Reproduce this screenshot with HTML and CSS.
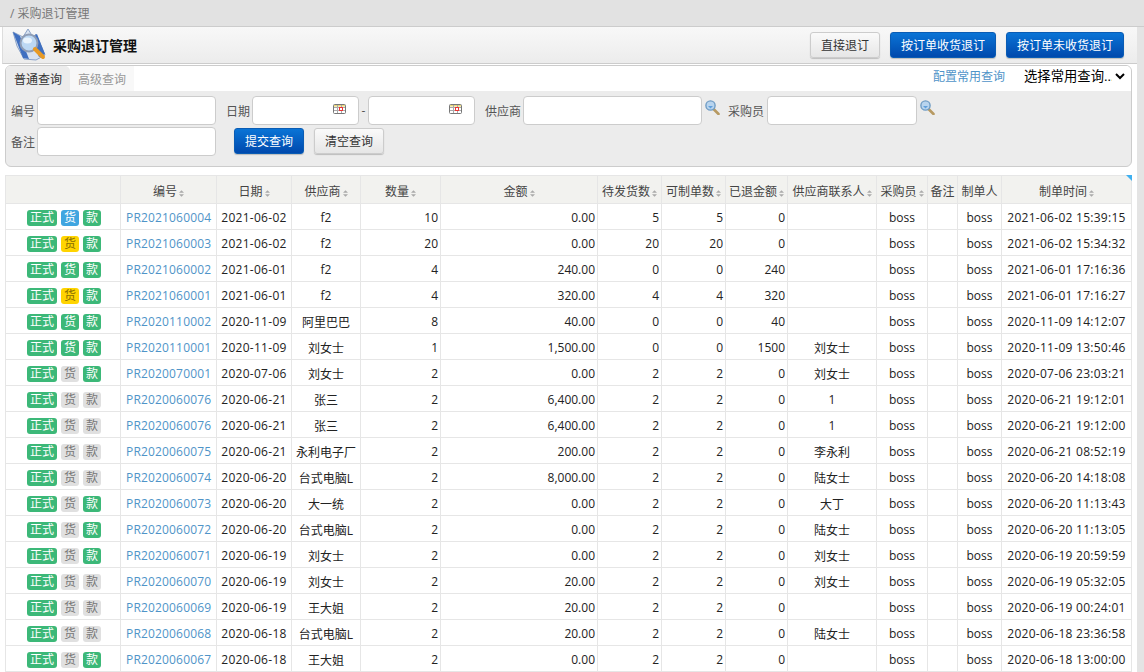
FILE: index.html
```html
<!DOCTYPE html>
<html lang="zh-CN">
<head>
    <meta charset="UTF-8">
    <title>采购退订管理</title>
    <link rel="stylesheet" href="styles.css">
</head>
<body>
    <svg class="svg-defs" width="0" height="0">
        <symbol id="ico-sort" viewBox="0 0 7 9">
            <path d="M3.5 0 L7 3.6 H0 Z M0 5.4 H7 L3.5 9 Z" fill="#aaa"/>
        </symbol>
        <symbol id="ico-cal" viewBox="0 0 13 10">
            <rect x="0.5" y="0.5" width="12" height="9" rx="1" fill="#fff" stroke="#777"/>
            <rect x="1" y="1" width="11" height="1.5" fill="#e8d878"/>
            <path d="M4.5 1V9M8.5 1V9M1 3.5H12M1 6.5H12" stroke="#aaa" stroke-width="1"/>
            <rect x="6.5" y="3.5" width="3" height="3" fill="#fff" stroke="#e33"/>
        </symbol>
        <symbol id="ico-find" viewBox="0 0 15 15">
            <path d="M8.5 9 L13.5 14" stroke="#b79a62" stroke-width="2.6" stroke-linecap="round"/>
            <circle cx="5.5" cy="5.5" r="4.6" fill="#b8d4ee" stroke="#6f9cc4" stroke-width="1.4"/>
            <path d="M3 6 L5.5 8.5 L8 6 Z" fill="#5f9fdc"/>
        </symbol>
    </svg>

    <div class="crumbs">/ 采购退订管理</div>

    <div class="page">
        <div class="main">
            <div class="title-bar">
                <svg class="logo" width="34" height="34" viewBox="0 0 34 34">
                    <path d="M1 4 L11 9 L16 1 L21 9 L24 6 L33 27 L24 32 L12 31 L5 18 Z" fill="#d8e2f0" stroke="#8ba3c8"/>
                    <path d="M1 4 L8 8 L17 31 L11 30 Z" fill="#3f6fc0"/>
                    <path d="M25 6 L33 26 L27 29 L20 10 Z" fill="#3f6fc0"/>
                    <circle cx="17" cy="15" r="8.5" fill="#bcd8f4" stroke="#8f9db5" stroke-width="2"/>
                    <ellipse cx="15.5" cy="12.5" rx="4.5" ry="3" fill="#eaf4fd"/>
                    <path d="M23 21 L31 29" stroke="#e89a24" stroke-width="4" stroke-linecap="round"/>
                </svg>
                <h1>采购退订管理</h1>
                <div class="title-actions">
                    <button class="btn">直接退订</button>
                    <button class="btn btn-primary">按订单收货退订</button>
                    <button class="btn btn-primary">按订单未收货退订</button>
                </div>
            </div>

            <div class="query-panel">
                <div class="query-tabs">
                    <span class="tab tab-active">普通查询</span>
                    <span class="tab">高级查询</span>
                    <div class="query-saved">
                        <a class="link" href="#">配置常用查询</a>
                        <select class="saved-select">
                            <option>选择常用查询...</option>
                        </select>
                    </div>
                </div>
                <div class="query-form">
                    <div class="form-row">
                        <label class="lbl">编号</label>
                        <input class="field field-code" type="text">
                        <label class="lbl lbl-date">日期</label>
                        <span class="date-field"><input class="field field-date" type="text"><svg class="cal"><use href="#ico-cal"/></svg></span>
                        <span class="dash">-</span>
                        <span class="date-field"><input class="field field-date" type="text"><svg class="cal"><use href="#ico-cal"/></svg></span>
                        <label class="lbl lbl-supplier">供应商</label>
                        <input class="field field-code" type="text">
                        <svg class="find"><use href="#ico-find"/></svg>
                        <label class="lbl lbl-buyer">采购员</label>
                        <input class="field field-buyer" type="text">
                        <svg class="find"><use href="#ico-find"/></svg>
                    </div>
                    <div class="form-row">
                        <label class="lbl">备注</label>
                        <input class="field field-code" type="text">
                        <button class="btn btn-primary btn-submit">提交查询</button>
                        <button class="btn btn-clear">清空查询</button>
                    </div>
                </div>
            </div>

            <div class="grid-wrap">
                <span class="grid-corner"></span>
                <table class="grid">
                    <colgroup>
                        <col class="c-status"><col class="c-code"><col class="c-date"><col class="c-supplier"><col class="c-qty"><col class="c-amount">
                        <col class="c-num"><col class="c-num"><col class="c-back"><col class="c-contact"><col class="c-buyer"><col class="c-note"><col class="c-maker"><col>
                    </colgroup>
                    <thead>
                        <tr>
                            <th></th>
                            <th>编号<svg class="sort"><use href="#ico-sort"/></svg></th>
                            <th>日期<svg class="sort"><use href="#ico-sort"/></svg></th>
                            <th>供应商<svg class="sort"><use href="#ico-sort"/></svg></th>
                            <th>数量<svg class="sort"><use href="#ico-sort"/></svg></th>
                            <th>金额<svg class="sort"><use href="#ico-sort"/></svg></th>
                            <th>待发货数<svg class="sort"><use href="#ico-sort"/></svg></th>
                            <th>可制单数<svg class="sort"><use href="#ico-sort"/></svg></th>
                            <th>已退金额<svg class="sort"><use href="#ico-sort"/></svg></th>
                            <th>供应商联系人<svg class="sort"><use href="#ico-sort"/></svg></th>
                            <th>采购员<svg class="sort"><use href="#ico-sort"/></svg></th>
                            <th>备注</th>
                            <th>制单人</th>
                            <th>制单时间<svg class="sort"><use href="#ico-sort"/></svg></th>
                        </tr>
                    </thead>
                    <tbody>
                        <tr>
                            <td class="badges"><span class="tag tag-formal">正式</span><span class="tag tag-blue">货</span><span class="tag tag-green">款</span></td>
                            <td class="code"><a class="link" href="#">PR2021060004</a></td><td>2021-06-02</td><td>f2</td><td class="r">10</td><td class="r">0.00</td><td class="r">5</td><td class="r">5</td><td class="r">0</td><td></td><td>boss</td><td></td><td>boss</td><td>2021-06-02 15:39:15</td>
                        </tr>
                        <tr>
                            <td class="badges"><span class="tag tag-formal">正式</span><span class="tag tag-yellow">货</span><span class="tag tag-green">款</span></td>
                            <td class="code"><a class="link" href="#">PR2021060003</a></td><td>2021-06-02</td><td>f2</td><td class="r">20</td><td class="r">0.00</td><td class="r">20</td><td class="r">20</td><td class="r">0</td><td></td><td>boss</td><td></td><td>boss</td><td>2021-06-02 15:34:32</td>
                        </tr>
                        <tr>
                            <td class="badges"><span class="tag tag-formal">正式</span><span class="tag tag-green">货</span><span class="tag tag-green">款</span></td>
                            <td class="code"><a class="link" href="#">PR2021060002</a></td><td>2021-06-01</td><td>f2</td><td class="r">4</td><td class="r">240.00</td><td class="r">0</td><td class="r">0</td><td class="r">240</td><td></td><td>boss</td><td></td><td>boss</td><td>2021-06-01 17:16:36</td>
                        </tr>
                        <tr>
                            <td class="badges"><span class="tag tag-formal">正式</span><span class="tag tag-yellow">货</span><span class="tag tag-green">款</span></td>
                            <td class="code"><a class="link" href="#">PR2021060001</a></td><td>2021-06-01</td><td>f2</td><td class="r">4</td><td class="r">320.00</td><td class="r">4</td><td class="r">4</td><td class="r">320</td><td></td><td>boss</td><td></td><td>boss</td><td>2021-06-01 17:16:27</td>
                        </tr>
                        <tr>
                            <td class="badges"><span class="tag tag-formal">正式</span><span class="tag tag-green">货</span><span class="tag tag-green">款</span></td>
                            <td class="code"><a class="link" href="#">PR2020110002</a></td><td>2020-11-09</td><td>阿里巴巴</td><td class="r">8</td><td class="r">40.00</td><td class="r">0</td><td class="r">0</td><td class="r">40</td><td></td><td>boss</td><td></td><td>boss</td><td>2020-11-09 14:12:07</td>
                        </tr>
                        <tr>
                            <td class="badges"><span class="tag tag-formal">正式</span><span class="tag tag-green">货</span><span class="tag tag-green">款</span></td>
                            <td class="code"><a class="link" href="#">PR2020110001</a></td><td>2020-11-09</td><td>刘女士</td><td class="r">1</td><td class="r">1,500.00</td><td class="r">0</td><td class="r">0</td><td class="r">1500</td><td>刘女士</td><td>boss</td><td></td><td>boss</td><td>2020-11-09 13:50:46</td>
                        </tr>
                        <tr>
                            <td class="badges"><span class="tag tag-formal">正式</span><span class="tag tag-gray">货</span><span class="tag tag-green">款</span></td>
                            <td class="code"><a class="link" href="#">PR2020070001</a></td><td>2020-07-06</td><td>刘女士</td><td class="r">2</td><td class="r">0.00</td><td class="r">2</td><td class="r">2</td><td class="r">0</td><td>刘女士</td><td>boss</td><td></td><td>boss</td><td>2020-07-06 23:03:21</td>
                        </tr>
                        <tr>
                            <td class="badges"><span class="tag tag-formal">正式</span><span class="tag tag-gray">货</span><span class="tag tag-gray">款</span></td>
                            <td class="code"><a class="link" href="#">PR2020060076</a></td><td>2020-06-21</td><td>张三</td><td class="r">2</td><td class="r">6,400.00</td><td class="r">2</td><td class="r">2</td><td class="r">0</td><td>1</td><td>boss</td><td></td><td>boss</td><td>2020-06-21 19:12:01</td>
                        </tr>
                        <tr>
                            <td class="badges"><span class="tag tag-formal">正式</span><span class="tag tag-gray">货</span><span class="tag tag-gray">款</span></td>
                            <td class="code"><a class="link" href="#">PR2020060076</a></td><td>2020-06-21</td><td>张三</td><td class="r">2</td><td class="r">6,400.00</td><td class="r">2</td><td class="r">2</td><td class="r">0</td><td>1</td><td>boss</td><td></td><td>boss</td><td>2020-06-21 19:12:00</td>
                        </tr>
                        <tr>
                            <td class="badges"><span class="tag tag-formal">正式</span><span class="tag tag-gray">货</span><span class="tag tag-gray">款</span></td>
                            <td class="code"><a class="link" href="#">PR2020060075</a></td><td>2020-06-21</td><td>永利电子厂</td><td class="r">2</td><td class="r">200.00</td><td class="r">2</td><td class="r">2</td><td class="r">0</td><td>李永利</td><td>boss</td><td></td><td>boss</td><td>2020-06-21 08:52:19</td>
                        </tr>
                        <tr>
                            <td class="badges"><span class="tag tag-formal">正式</span><span class="tag tag-gray">货</span><span class="tag tag-gray">款</span></td>
                            <td class="code"><a class="link" href="#">PR2020060074</a></td><td>2020-06-20</td><td>台式电脑L</td><td class="r">2</td><td class="r">8,000.00</td><td class="r">2</td><td class="r">2</td><td class="r">0</td><td>陆女士</td><td>boss</td><td></td><td>boss</td><td>2020-06-20 14:18:08</td>
                        </tr>
                        <tr>
                            <td class="badges"><span class="tag tag-formal">正式</span><span class="tag tag-gray">货</span><span class="tag tag-green">款</span></td>
                            <td class="code"><a class="link" href="#">PR2020060073</a></td><td>2020-06-20</td><td>大一统</td><td class="r">2</td><td class="r">0.00</td><td class="r">2</td><td class="r">2</td><td class="r">0</td><td>大丁</td><td>boss</td><td></td><td>boss</td><td>2020-06-20 11:13:43</td>
                        </tr>
                        <tr>
                            <td class="badges"><span class="tag tag-formal">正式</span><span class="tag tag-gray">货</span><span class="tag tag-green">款</span></td>
                            <td class="code"><a class="link" href="#">PR2020060072</a></td><td>2020-06-20</td><td>台式电脑L</td><td class="r">2</td><td class="r">0.00</td><td class="r">2</td><td class="r">2</td><td class="r">0</td><td>陆女士</td><td>boss</td><td></td><td>boss</td><td>2020-06-20 11:13:05</td>
                        </tr>
                        <tr>
                            <td class="badges"><span class="tag tag-formal">正式</span><span class="tag tag-gray">货</span><span class="tag tag-green">款</span></td>
                            <td class="code"><a class="link" href="#">PR2020060071</a></td><td>2020-06-19</td><td>刘女士</td><td class="r">2</td><td class="r">0.00</td><td class="r">2</td><td class="r">2</td><td class="r">0</td><td>刘女士</td><td>boss</td><td></td><td>boss</td><td>2020-06-19 20:59:59</td>
                        </tr>
                        <tr>
                            <td class="badges"><span class="tag tag-formal">正式</span><span class="tag tag-gray">货</span><span class="tag tag-gray">款</span></td>
                            <td class="code"><a class="link" href="#">PR2020060070</a></td><td>2020-06-19</td><td>刘女士</td><td class="r">2</td><td class="r">20.00</td><td class="r">2</td><td class="r">2</td><td class="r">0</td><td>刘女士</td><td>boss</td><td></td><td>boss</td><td>2020-06-19 05:32:05</td>
                        </tr>
                        <tr>
                            <td class="badges"><span class="tag tag-formal">正式</span><span class="tag tag-gray">货</span><span class="tag tag-gray">款</span></td>
                            <td class="code"><a class="link" href="#">PR2020060069</a></td><td>2020-06-19</td><td>王大姐</td><td class="r">2</td><td class="r">20.00</td><td class="r">2</td><td class="r">2</td><td class="r">0</td><td></td><td>boss</td><td></td><td>boss</td><td>2020-06-19 00:24:01</td>
                        </tr>
                        <tr>
                            <td class="badges"><span class="tag tag-formal">正式</span><span class="tag tag-gray">货</span><span class="tag tag-gray">款</span></td>
                            <td class="code"><a class="link" href="#">PR2020060068</a></td><td>2020-06-18</td><td>台式电脑L</td><td class="r">2</td><td class="r">20.00</td><td class="r">2</td><td class="r">2</td><td class="r">0</td><td>陆女士</td><td>boss</td><td></td><td>boss</td><td>2020-06-18 23:36:58</td>
                        </tr>
                        <tr>
                            <td class="badges"><span class="tag tag-formal">正式</span><span class="tag tag-gray">货</span><span class="tag tag-green">款</span></td>
                            <td class="code"><a class="link" href="#">PR2020060067</a></td><td>2020-06-18</td><td>王大姐</td><td class="r">2</td><td class="r">0.00</td><td class="r">2</td><td class="r">2</td><td class="r">0</td><td></td><td>boss</td><td></td><td>boss</td><td>2020-06-18 13:00:00</td>
                        </tr>
                    </tbody>
                </table>
            </div>
        </div>
        <div class="side-strip"></div>
    </div>
</body>
</html>
```

FILE: styles.css
```css
html, body {
    height: 672px;
    overflow: hidden;
}
body {
    margin: 0;
    font-family: "Open Sans", "Noto Sans CJK SC", sans-serif;
    font-size: 12px;
    color: #222;
    background-color: #fff;
}
.svg-defs {
    position: absolute;
}
.link {
    color: #4f94c8;
    text-decoration: none;
}

.crumbs {
    height: 27px;
    line-height: 28px;
    padding-left: 10px;
    box-sizing: border-box;
    color: #777;
    background-color: #e2e2e2;
    border-bottom: 1px solid #ccc;
}
.page {
    display: flex;
    height: 645px;
}
.main {
    flex: none;
    margin-left: 2px;
    width: 1135px;
}
.side-strip {
    flex: 1;
    background-color: #e4e4e4;
}

.title-bar {
    display: flex;
    align-items: center;
    height: 37px;
    box-sizing: border-box;
    padding-left: 9px;
    background: linear-gradient(#f8f8f8, #ececec);
    border-left: 1px solid #ddd;
    border-bottom: 1px solid #ccc;
}
.logo {
    flex: none;
    margin-right: 7px;
}
.title-bar h1 {
    margin: 0;
    font-size: 14px;
    color: #111;
}
.title-actions {
    display: flex;
    gap: 10px;
    margin-left: auto;
    margin-right: 13px;
}

.btn {
    height: 26px;
    padding: 0 10px;
    font-family: inherit;
    font-size: 12px;
    color: #333;
    background: linear-gradient(#fafafa, #e6e6e6);
    border: 1px solid #ccc;
    border-radius: 3px;
    box-shadow: 0 1px 1px rgba(0, 0, 0, 0.2);
}
.btn-primary {
    color: #fff;
    background: linear-gradient(#0a74d6, #0049ad);
    border-color: #0a5cb4;
}
.btn-submit {
    margin: 0 0 2px 18px;
    width: 70px;
    padding: 0;
}
.btn-clear {
    margin: 0 0 2px 10px;
    width: 70px;
    padding: 0;
}

.query-panel {
    margin: 1px 0 0 3px;
    width: 1127px;
    height: 102px;
    box-sizing: border-box;
    background-color: #ececec;
    border: 1px solid #ccc;
    border-radius: 6px;
    overflow: hidden;
}
.query-tabs {
    display: flex;
    align-items: flex-start;
    height: 25px;
    background-color: #fff;
}
.tab {
    display: block;
    width: 64px;
    padding-top: 3px;
    height: 22px;
    line-height: 22px;
    text-align: center;
    color: #999;
    background-color: #f8f8f8;
}
.tab-active {
    color: #333;
    background-color: #ececec;
    border-top-right-radius: 5px;
}
.query-saved {
    display: flex;
    align-items: center;
    margin-left: auto;
    margin-right: 3px;
    gap: 15px;
}
.saved-select {
    width: 108px;
    height: 20px;
    padding: 0;
    font-family: inherit;
    font-size: 13.33px;
    color: #000;
    background-color: #fff;
    border: none;
}

.query-form {
    padding-top: 5px;
}
.form-row {
    display: flex;
    align-items: center;
    height: 29px;
    margin-bottom: 2px;
}
.lbl {
    width: 31px;
    padding-left: 5px;
    box-sizing: border-box;
    color: #555;
    white-space: nowrap;
}
.lbl-date {
    width: auto;
    padding: 0;
    margin: 0 2px 0 10px;
}
.lbl-supplier {
    width: auto;
    padding: 0;
    margin: 0 2px 0 10px;
}
.lbl-buyer {
    width: auto;
    padding: 0;
    margin: 0 3px 0 8px;
}
.field {
    height: 29px;
    box-sizing: border-box;
    background-color: #fff;
    border: 1px solid #ccc;
    border-radius: 4px;
    padding: 0 6px;
}
.field-code {
    width: 179px;
}
.field-buyer {
    width: 150px;
}
.field-date {
    width: 107px;
}
.date-field {
    position: relative;
    display: block;
    height: 29px;
}
.cal {
    position: absolute;
    left: 81px;
    top: 8px;
    width: 13px;
    height: 10px;
}
.dash {
    width: 9px;
    text-align: center;
    color: #555;
}
.find {
    width: 15px;
    height: 15px;
    margin: 0 0 7px 3px;
}

.grid-wrap {
    position: relative;
    margin: 8px 0 0 3px;
    width: 1127px;
}
.grid-corner {
    position: absolute;
    top: 0;
    right: 0;
    border-top: 6px solid #3fb0f0;
    border-left: 6px solid transparent;
}
.grid {
    width: 100%;
    table-layout: fixed;
    border-collapse: collapse;
}
.c-status { width: 115px; }
.c-code { width: 96px; }
.c-date { width: 75px; }
.c-supplier { width: 69px; }
.c-qty { width: 80px; }
.c-amount { width: 157px; }
.c-num { width: 64px; }
.c-back { width: 62px; }
.c-contact { width: 89px; }
.c-buyer { width: 51px; }
.c-note { width: 30px; }
.c-maker { width: 44px; }
.grid th, .grid td {
    height: 26px;
    padding: 2px 2px 0;
    box-sizing: border-box;
    border: 1px solid #e6e6e6;
    text-align: center;
    white-space: nowrap;
    overflow: hidden;
}
.grid th {
    height: 28px;
    font-weight: normal;
    color: #444;
    background-color: #f2f2ef;
}
.grid td.r {
    text-align: right;
}
.grid td.code {
    text-align: left;
    padding-left: 5px;
    letter-spacing: 0.17px;
}
.grid td:nth-child(3), .grid td:nth-child(14) {
    letter-spacing: 0.27px;
}
.sort {
    width: 5px;
    height: 7px;
    margin-left: 2px;
    vertical-align: -1px;
}

.grid td.badges {
    padding: 3px 0 0 21px;
    text-align: left;
    font-size: 0;
}
.tag {
    display: inline-block;
    height: 16px;
    line-height: 16px;
    width: 18px;
    margin-right: 4px;
    font-size: 12px;
    text-align: center;
    border-radius: 3px;
    color: #fff;
    vertical-align: middle;
}
.tag-formal {
    width: 30px;
    background-color: #3cb878;
}
.tag-green {
    background-color: #3cb878;
}
.tag-blue {
    background-color: #3fa5e0;
}
.tag-yellow {
    color: #8a6d00;
    background-color: #ffd400;
}
.tag-gray {
    color: #777;
    background-color: #e0e0e0;
}
```
